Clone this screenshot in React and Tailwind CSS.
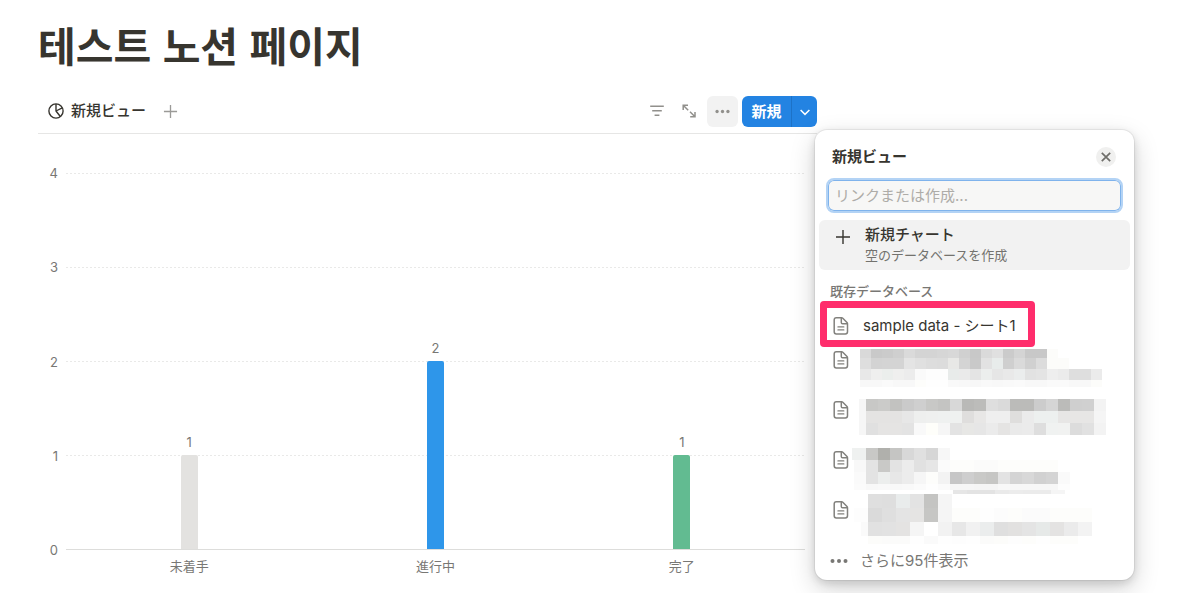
import React from "react";

const BARS = [
  { label: "未着手", value: 1, color: "bg-[#e3e2e0]" },
  { label: "進行中", value: 2, color: "bg-[#2e96ea]" },
  { label: "完了", value: 1, color: "bg-[#62bb91]" },
];
const MAX = 4;
const TICKS = [4, 3, 2, 1, 0];

/* Pixelated titles: each strip is a row of equally wide cells. */
const MOSAICS = [
  [
    { x: 7, y: 3, w: 11, h: 9, c: "d9d9d9 c9c9c9 cbcbcb cfcfcf dadada d4d4d4 d4d4d4 d6d6d6 d8d8d8 d0d0d0 c8c8c8 dadada e0e0e0 cbcbcb d4d4d4 c8c8c8 c8c8c8 fcfcfa" },
    { x: 7, y: 12, w: 11, h: 11, c: "dedede d3d3d3 d4d4d4 d4d4d4 e4e4e4 e0e0e0 dddddd dcdcdc e8e8e6 d4d4d4 c9c9c9 e2e2e2 e8eceb cfcfcf dadada d0d0d0 dcdcdc fcfcfa fcfcfa" },
    { x: 7, y: 23, w: 11, h: 11, c: "e8e8e8 efefee ebeeec efefee ececec fafafa fdfdfd fdfdfd e8ebea eaeaea e4e4e4 eceeed e6e6e6 e9e9e9 ebeded e2e2e2 e4e4e4 eeeeee ebebeb dedede dedede ebebeb" },
    { x: 7, y: 34, w: 11, h: 7, c: "f8f8f8 f8f8f8 fafafa f8f8f8 f8f8f8 fdfdfb fefefe fefefe f9f9f9 f8f8f8 f7f7f7 f9f9f9 f8f8f8 f9f9f9 fafafa f8f8f8 f8f8f8 fafafa fafafa f8f8f8 f8f8f8 fcfcfa" },
  ],
  [
    { x: 6, y: 3, w: 7, h: 36, c: "f6f6f6" },
    { x: 13, y: 3, w: 12, h: 12, c: "c8c8c6 cbcbc9 c2c2c0 cacaca cfcfcf c8c8c6 c4c4c2 d8d8d8 b9b9b7 bcbcba dedede dadada bbbbb9 bbbbb9 cccccc d5d5d5 bbbbb9 cfcfcf d0d0d0 f3f3f3" },
    { x: 13, y: 15, w: 12, h: 12, c: "e4e3e2 e4e3e2 e4e3e2 e7e7e7 eeefee eff0ef eff1f0 eff1f0 dfdedd e8e7e6 efefef efefef dfdedd ebebeb edf0ef edf0ef e7e6e5 e7e6e5 e7e6e5 f5f5f5" },
    { x: 13, y: 27, w: 12, h: 12, c: "e0e0e0 e5e4e3 e5e4e3 e3e3e3 f9f9f9 fefefa f6f6f6 e3e3e3 e7e7e5 e6e6e6 ebebeb e5e4e3 eaeaea ebebeb dedede f0f2f1 f1f2f1 dcdcdc e1e1e1 f3f3f3" },
  ],
  [
    { x: -1, y: 2, w: 14, h: 12, c: "eff1f0" },
    { x: 13, y: 2, w: 12, h: 12, c: "c8c8c6 b0b0ac c5c5c3 d8d8d8 e0e0e0 d6d6d6 f7f7f7" },
    { x: 1, y: 14, w: 12, h: 12, c: "f8f8f8 e3e3e3 c9c9c7 e3e3e3 ececec e1e1e1 e6e6e6 fbfbfb fdfdfb fdfdfb fbfbfa fbfbfa fdfdfb fdfdfb fdfdfb fdfdfb fdfdfb" },
    { x: 1, y: 26, w: 12, h: 12, c: "fafafa e3e3e3 eceeed e7e7e7 ececec f6f6f6 fdfdfb f3f3f3 c6c6c6 cecece c9c9c7 c6c6c4 e3e3e3 d4d4d4 d8d8d8 d1d1d1 d4d4d4 fafafa" },
    { x: 1, y: 38, w: 12, h: 6, c: "fbfbfb f8f8f8 f9f9f9 f8f8f8 f9f9f9 fbfbfb fefefe fbfbfb f6f6f6 f6f6f6 f5f5f5 f5f5f5 f8f8f8 f7f7f7 f7f7f7 f7f7f7 f7f7f7 fdfdfd" },
    { x: 100, y: 44, w: 14, h: 4, c: "e6e6e6 e3e3e3 e3e3e3 eaeaea ececec ebebeb ebebeb f5f5f5" },
  ],
  [
    { x: 15, y: -2, w: 14, h: 14, c: "dfdfdf dedede e9ecec e3e3e3 c4c4c2 f5f5f5" },
    { x: 1, y: 12, w: 14, h: 14, c: "fdfdfd dadada dfdfdf e4e4e4 e5e4e3 c6c6c4 f5f5f5 fdfdfb fdfdfb fefefe fcfcfc fdfdfb fbfbfb fbfbfb fdfdfb fdfdfb fdfdfb" },
    { x: 8, y: 26, w: 7, h: 14, c: "fafafa" },
    { x: 15, y: 26, w: 14, h: 14, c: "e1e1e1 e2e2e2 e4e3e2 f5f5f5 ffffff f2f2f2 e7e7e7 f1f1f1 ebeded dfdfdf e2e1e0 e4e4e4 e6e9e8 e4e3e2 ebebeb f3f3f3" },
    { x: 15, y: 40, w: 14, h: 8, c: "fcfcfa fbfbfa fbfbfa fefefe fafafa fefefe fdfdfd fefefe fbfbfa fcfcfa fdfdfd fdfdfb fefefe fdfdfb fdfdfb" },
  ],
];

function Mosaic({ strips }) {
  return (
    <svg className="h-[50px] w-[260px] shrink-0 overflow-visible" viewBox="0 0 260 50" shapeRendering="crispEdges" aria-hidden="true">
      {strips.map((s, i) =>
        s.c.split(" ").map((c, k) => (
          <rect key={`${i}-${k}`} x={s.x + k * s.w} y={s.y} width={s.w} height={s.h} fill={`#${c}`} />
        ))
      )}
    </svg>
  );
}

function PageIcon() {
  return (
    <svg className="h-[18px] w-4 shrink-0" viewBox="0 0 16 18" fill="none" stroke="#82817d" strokeWidth="1.5" strokeLinejoin="round" strokeLinecap="round" aria-hidden="true">
      <path d="M3.3 .8H8.6c.5 0 .9.2 1.2.5l4.2 4.3c.3.3.5.7.5 1.2v8c0 1.3-.8 2.2-2.2 2.2H3.3C1.9 17 1.2 16.1 1.2 14.8V3C1.2 1.6 2 .8 3.3 .8Z" />
      <path d="M8.3 1v4.4c0 .8.5 1.3 1.3 1.3h4.6" />
      <path d="M4.9 9.9h6M4.9 12.9h6" strokeWidth="1.1" />
    </svg>
  );
}

function PieIcon() {
  return (
    <svg className="size-4" viewBox="0 0 16 16" fill="none" stroke="#37352f" strokeWidth="1.4" strokeLinejoin="round" aria-hidden="true">
      <circle cx="8" cy="8" r="7.1" />
      <path d="M8 1v7l6.3-3.2M8 8l4.3 5.5" />
    </svg>
  );
}

function Plus({ className }) {
  return (
    <svg className={className} viewBox="0 0 16 16" fill="none" stroke="currentColor" aria-hidden="true">
      <path d="M8 1v14M1 8h14" strokeWidth="1.4" />
    </svg>
  );
}

function Dots({ className }) {
  return (
    <svg className={className} viewBox="0 0 18 6" fill="currentColor" aria-hidden="true">
      <circle cx="2.5" cy="3" r="2" />
      <circle cx="9" cy="3" r="2" />
      <circle cx="15.5" cy="3" r="2" />
    </svg>
  );
}

function NewViewMenu() {
  return (
    <section
      aria-label="新規ビュー"
      className="absolute top-[34px] left-[73px] z-10 flex w-[319px] flex-col rounded-xl bg-white pb-1 shadow-[0_0_0_1px_rgba(15,15,15,0.06),0_3px_8px_rgba(15,15,15,0.14),0_9px_26px_rgba(15,15,15,0.18)]"
    >
      <header className="flex h-12 items-center justify-between pt-[6px] pr-[18px] pl-[17px]">
        <h2 className="text-[15px] leading-5 font-bold">新規ビュー</h2>
        <button type="button" aria-label="閉じる" className="flex size-5 items-center justify-center rounded-full bg-[#f0f0ef] text-[#6f6e6a]">
          <svg className="size-2.5" viewBox="0 0 10 10" stroke="currentColor" strokeWidth="1.7" aria-hidden="true">
            <path d="M.8 .8l8.4 8.4M9.2 .8L.8 9.2" />
          </svg>
        </button>
      </header>
      <div className="px-[11px]">
        <input
          type="text"
          aria-label="リンクまたは作成"
          placeholder="リンクまたは作成..."
          className="h-[35px] w-full rounded-lg border-2 border-[#b3d3f5] bg-[#f7f7f6] px-[7px] text-[15px] leading-5 shadow-[inset_0_0_0_1px_#7fb3ec] outline-none placeholder:text-[#aeaca8]"
        />
      </div>
      <button type="button" className="mx-1 mt-[7px] flex h-[50px] rounded-md bg-[#f2f2f2] pt-[5px] pl-4 text-left">
        <Plus className="mt-1 size-4 text-[#37352f]" />
        <span className="ml-[14px] flex flex-col">
          <span className="text-[15px] leading-5 font-medium">新規チャート</span>
          <span className="text-[13px] leading-5 text-[#73726e]">空のデータベースを作成</span>
        </span>
      </button>
      <h3 className="mt-[11px] pl-[15px] text-[13px] leading-5 font-medium text-[#787774]">既存データベース</h3>
      <ul className="flex flex-col">
        <li className="relative flex h-[45px] items-center pt-[5px] pl-[18px]">
          <PageIcon />
          <a href="#sample-data" className="ml-[14px] text-[15px] leading-5">sample data - シート1</a>
          <span className="pointer-events-none absolute top-0 left-[5px] h-[46px] w-[215px] rounded border-[7px] border-[#ff2d6c]" />
        </li>
        {MOSAICS.map((strips, i) => (
          <li key={i} className="flex h-[50px] pl-[18px]">
            <span className="flex h-[28px] items-center">
              <PageIcon />
            </span>
            <span className="ml-1 flex">
              <Mosaic strips={strips} />
            </span>
          </li>
        ))}
      </ul>
      <button type="button" className="flex h-[30px] items-center pl-[15px] text-[15px] leading-5 text-[#787774]">
        <Dots className="h-1.5 w-[18px]" />
        <span className="ml-3">さらに95件表示</span>
      </button>
    </section>
  );
}

function Toolbar() {
  return (
    <div className="flex h-[38px] items-start justify-between border-b border-[#e6e6e5]">
      <div className="flex h-[30px] items-center pl-[10px]">
        <button type="button" className="flex items-center gap-[7px] text-[15px] leading-5 font-medium">
          <PieIcon />
          新規ビュー
        </button>
        <button type="button" aria-label="ビューを追加" className="ml-[17px] text-[#9b9a97]">
          <Plus className="size-[15px]" />
        </button>
      </div>
      <div className="flex items-start text-[#91908c]">
        <button type="button" aria-label="フィルター" className="flex h-[30px] w-8 items-center justify-center">
          <svg className="size-4" viewBox="0 0 16 16" stroke="currentColor" strokeWidth="1.4" aria-hidden="true">
            <path d="M1.2 3.3h13.6M3.2 7.8h9.6M5.6 12.3h4.8" />
          </svg>
        </button>
        <button type="button" aria-label="拡大" className="flex h-[30px] w-8 items-center justify-center">
          <svg className="size-4" viewBox="0 0 16 16" fill="none" stroke="currentColor" strokeWidth="1.5" aria-hidden="true">
            <path d="M2.2 7V2.2H7M2.2 2.2l5 5M14 9v4.8H9.2M14 13.8l-5-5" />
          </svg>
        </button>
        <button type="button" aria-label="その他" className="ml-[2px] flex size-[31px] items-center justify-center rounded-md bg-[#f2f2f2]">
          <Dots className="h-[5px] w-[15px]" />
        </button>
        <div className="relative ml-1 text-[#37352f]">
          <div className="flex h-[31px] overflow-hidden rounded-md bg-[#2383e2] text-white">
            <button type="button" className="w-[50px] border-r border-[#1d72c7] text-[15px] leading-5 font-bold">新規</button>
            <button type="button" aria-label="新規メニュー" className="flex w-[25px] items-center justify-center">
              <svg className="size-2.5" viewBox="0 0 10 10" fill="none" stroke="currentColor" strokeWidth="1.5" aria-hidden="true">
                <path d="M.6 3l4.4 4.4L9.4 3" />
              </svg>
            </button>
          </div>
          <NewViewMenu />
        </div>
      </div>
    </div>
  );
}

function Chart() {
  return (
    <figure className="flex pt-[39px] pr-3 text-[13px] leading-5 text-[#787774]">
      <div className="-mt-2.5 flex h-[397px] w-5 flex-col justify-between text-right">
        {TICKS.map((t) => (
          <span key={t}>{t}</span>
        ))}
      </div>
      <div className="ml-2 grid flex-1 content-start">
        <div className="flex h-[377px] flex-col justify-between [grid-area:1/1]">
          {TICKS.map((t) => (
            <div
              key={t}
              className={
                t === 0
                  ? "h-px bg-[#dddddb]"
                  : "h-px bg-[repeating-linear-gradient(90deg,#e9e9e8_0_2px,transparent_2px_4px)]"
              }
            />
          ))}
        </div>
        <div className="flex h-[376px] [grid-area:1/1]">
          {BARS.map((b) => (
            <div key={b.label} className="flex flex-1 flex-col items-center justify-end">
              <span className="mb-[3px]">{b.value}</span>
              <div className={`w-[17px] shrink-0 rounded-t-xs ${b.color}`} style={{ height: `${(b.value / MAX) * 100}%` }} />
            </div>
          ))}
        </div>
        <div className="flex pt-[6px] [grid-area:2/1]">
          {BARS.map((b) => (
            <span key={b.label} className="flex-1 text-center">{b.label}</span>
          ))}
        </div>
      </div>
    </figure>
  );
}

export default function App() {
  return (
    <main className="min-h-screen bg-white pt-[14px] pr-[374px] pl-[38px] font-['Inter','Noto_Sans_CJK_JP',sans-serif] text-[#37352f]">
      <h1 lang="ko" className="mb-[22px] font-['Noto_Sans_CJK_KR',sans-serif] text-[41px] leading-[60px] font-bold whitespace-nowrap">
        테스트 노션 페이지
      </h1>
      <Toolbar />
      <Chart />
    </main>
  );
}
